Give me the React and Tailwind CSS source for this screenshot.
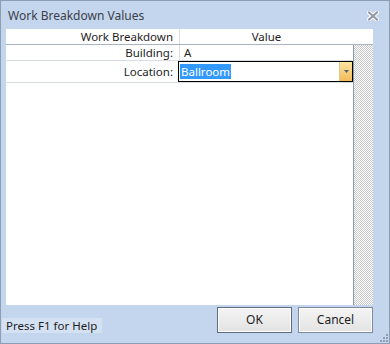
import React from 'react';

function CloseIcon() {
  return (
    <svg width="12" height="10" viewBox="0 0 12 10" className="block">
      <path d="M2 1.5 L10 8.5 M10 1.5 L2 8.5" stroke="#ffffff" strokeWidth="4" strokeLinecap="square" />
      <path d="M2 1.5 L10 8.5 M10 1.5 L2 8.5" stroke="#8c97a6" strokeWidth="2" strokeLinecap="square" />
    </svg>
  );
}

function Row({ label, children, tall }) {
  return (
    <div className={`flex border-b border-[#d8dde4] ${tall ? 'h-[22px]' : 'h-[16px]'}`}>
      <div className="w-[174px] shrink-0 border-r border-[#d8dde4] flex items-center justify-end pr-[6px]">
        {label}
      </div>
      <div className="flex-1 flex items-center">{children}</div>
    </div>
  );
}

export default function App() {
  return (
    <div className="w-[390px] h-[344px] bg-[#c4d6ee] border border-[#8d9db2] flex flex-col text-[#1e1e1e] text-[11.5px] leading-none font-['Noto_Sans',sans-serif] overflow-hidden">
      {/* Title bar */}
      <div className="h-[28px] shrink-0 flex items-center justify-between pl-[7px] pr-[10px] pt-[1px]">
        <span className="text-[12px] text-[#3b4048]">Work Breakdown Values</span>
        <CloseIcon />
      </div>

      {/* Grid panel */}
      <div className="mx-[5px] mr-[16px] flex-1 flex flex-col bg-white">
        <div className="h-[16px] shrink-0 flex border-b border-[#a9b3c0]">
          <div className="w-[174px] shrink-0 border-r border-[#d8dde4] flex items-center justify-end pr-[6px]">
            Work Breakdown
          </div>
          <div className="w-[173px] shrink-0 flex items-center justify-center">Value</div>
          <div className="flex-1" />
        </div>
        <div className="flex-1 flex">
          <div className="flex-1 flex flex-col">
            <Row label="Building:">
              <span className="pl-[4px]">A</span>
            </Row>
            <Row label="Location:" tall>
              <div className="ml-[-2px] h-[21px] w-[175px] border border-black flex items-center justify-between bg-white">
                <span className="ml-[1px] bg-[#3399ff] text-white px-[1px] h-[15px] flex items-center">Ballroom</span>
                <div className="h-full w-[13px] flex items-center justify-center bg-gradient-to-b from-[#fbe3a2] to-[#f2bb58] border-l border-[#e0c88a]">
                  <svg width="5" height="3" viewBox="0 0 5 3">
                    <path d="M0 0 H5 L2.5 3 Z" fill="#5a6578" />
                  </svg>
                </div>
              </div>
            </Row>
          </div>
          <div className="w-[20px] shrink-0 border-l border-[#8f9aa8] bg-[repeating-conic-gradient(#c8c8c8_0_25%,#ffffff_0_50%)] bg-[length:2px_2px]" />
        </div>
      </div>

      {/* Bottom bar */}
      <div className="h-[38px] shrink-0 flex items-start justify-between">
        <div className="mt-[13px] ml-[1px] w-[100px] h-[15px] bg-[#d4e1f2] flex items-center pl-[4px] text-[11.5px]">
          Press F1 for Help
        </div>
        <div className="flex flex-col items-end">
          <div className="flex gap-[6px] mt-[2px] mr-[16px]">
            <button className="w-[75px] h-[26px] border border-[#5f6b7a] bg-gradient-to-b from-[#f4f4f4] to-[#e3e3e3] shadow-[inset_0_0_0_1px_#ffffff] text-[12px]">
              OK
            </button>
            <button className="w-[75px] h-[26px] border border-[#7e8a99] bg-gradient-to-b from-[#f4f4f4] to-[#e3e3e3] shadow-[inset_0_0_0_1px_#ffffff] text-[12px]">
              Cancel
            </button>
          </div>
          <svg width="8" height="8" viewBox="0 0 8 8" className="mr-[1px] mt-[1px]">
            <rect x="6" y="0" width="2" height="2" fill="#8d9db2" />
            <rect x="3" y="3" width="2" height="2" fill="#8d9db2" />
            <rect x="6" y="3" width="2" height="2" fill="#8d9db2" />
            <rect x="0" y="6" width="2" height="2" fill="#8d9db2" />
            <rect x="3" y="6" width="2" height="2" fill="#8d9db2" />
            <rect x="6" y="6" width="2" height="2" fill="#8d9db2" />
          </svg>
        </div>
      </div>
    </div>
  );
}
